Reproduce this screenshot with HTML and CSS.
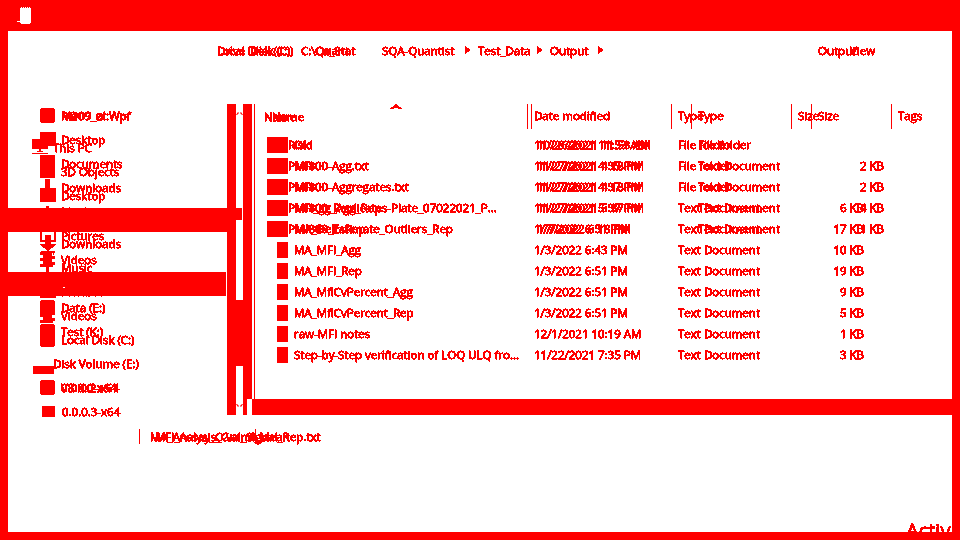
FILE: index.html
```html
<!DOCTYPE html>
<html lang="en">
<head>
<meta charset="utf-8">
<title>Output</title>
<link rel="stylesheet" href="styles.css">
</head>
<body>
<svg class="defs" width="0" height="0" aria-hidden="true">
  <filter id="crisp" x="0" y="0" width="100%" height="100%" color-interpolation-filters="sRGB">
    <feComponentTransfer><feFuncA type="discrete" tableValues="0 1 1 1 1 1 1 1"/></feComponentTransfer>
  </filter>
</svg>
<div class="app">
  <header class="titlebar">
    <svg class="app-icon" width="16" height="17" viewBox="0 0 16 17"><path d="M3 1h1v-1h1v1h1v-1h1v1h1v-1h1v1h1v-1h1v1h1v-1h1v1h1v15h-1v1H4v-1H3v-1H0v-1h3z" fill="#fff"/></svg>
  </header>
  <main class="window">
    <section class="layer layer-a ink">
      <div class="toolbar">
        <span class="stack crumb c1"><span>Local Disk (C:)</span><span>Drive 'Disk (C:)</span></span>
        <span class="stack crumb c2"><span>C:\Quant</span><span class="shift">Cu_Stat</span></span>
        <span class="crumb c3">SQA-Quantist</span><span class="chev"></span>
        <span class="crumb c4">Test_Data</span><span class="chev"></span>
        <span class="crumb c5">Output</span><span class="chev"></span>
        <span class="stack search"><span>Output</span><span class="view">View</span></span>
      </div>
      <div class="main">
        <nav class="nav">
          <div class="nav-row"><i class="ico blob"></i><span class="stack"><span>Ma09_ul:Wpf</span><span>R@09_zt:Wpf</span></span></div>
          <div class="nav-row"><i class="ico folder"></i>Desktop</div>
          <div class="nav-row"><i class="ico doc"></i>Documents</div>
          <div class="nav-row"><i class="ico stem"></i>Downloads</div>
          <div class="nav-row"><i class="ico note"></i>Music</div>
          <div class="nav-row"><i class="ico frame"></i>Pictures</div>
          <div class="nav-row"><i class="ico film"></i>Videos</div>
          <div class="nav-row"><i class="ico blob"></i>Local Disk (C:)</div>
          <div class="nav-row"><i class="ico blob"></i>Data (E:)</div>
          <div class="nav-row"><i class="ico blob"></i>Test (K:)</div>
        </nav>
        <div class="list">
          <div class="row head">
            <div class="th name">Name</div><div class="th">Date modified</div><div class="th">Type</div><div class="th">Size</div>
          </div>
          <div class="rows">
            <div class="row"><div class="name"><i class="fico"></i>Old</div><div class="td">11/28/2021 11:53 AM</div><div class="td">File folder</div><div class="td size"></div></div>
            <div class="row"><div class="name"><i class="fico"></i>MFI</div><div class="td">11/27/2021 4:35 PM</div><div class="td">File folder</div><div class="td size"></div></div>
            <div class="row"><div class="name"><i class="fico"></i>MFI</div><div class="td">11/27/2021 4:37 PM</div><div class="td">File folder</div><div class="td size"></div></div>
            <div class="row"><div class="name"><i class="fico"></i>MFI_gg_Agg_Rep</div><div class="td">11/27/2021 5:37 PM</div><div class="td">Text Document</div><div class="td size">6 KB</div></div>
            <div class="row"><div class="name"><i class="fico"></i>MA_DeltaRep</div><div class="td">1/7/2022 6:51 PM</div><div class="td">Text Document</div><div class="td size">17 KB</div></div>
            <div class="row"><div class="name"><i class="fico"></i>MA_MFI_Agg</div><div class="td">1/3/2022 6:43 PM</div><div class="td">Text Document</div><div class="td size">10 KB</div></div>
            <div class="row"><div class="name"><i class="fico"></i>MA_MFI_Rep</div><div class="td">1/3/2022 6:51 PM</div><div class="td">Text Document</div><div class="td size">19 KB</div></div>
            <div class="row"><div class="name"><i class="fico"></i>MA_MfiCvPercent_Agg</div><div class="td">1/3/2022 6:51 PM</div><div class="td">Text Document</div><div class="td size">9 KB</div></div>
            <div class="row"><div class="name"><i class="fico"></i>MA_MfiCvPercent_Rep</div><div class="td">1/3/2022 6:51 PM</div><div class="td">Text Document</div><div class="td size">5 KB</div></div>
            <div class="row"><div class="name"><i class="fico"></i>raw-MFI notes</div><div class="td">12/1/2021 10:19 AM</div><div class="td">Text Document</div><div class="td size">1 KB</div></div>
            <div class="row"><div class="name"><i class="fico"></i>Step-by-Step verification of LOQ ULQ fro...</div><div class="td">11/22/2021 7:35 PM</div><div class="td">Text Document</div><div class="td size">3 KB</div></div>
          </div>
        </div>
      </div>
      <div class="status"><span class="stack"><span>MA_Analysis_Grand_Mean</span><span class="shift-s">MFI_Assay_C-val_Signal_Rep.txt</span></span></div>
    </section>

    <section class="layer layer-b ink">
      <div class="toolbar"></div>
      <div class="main">
        <nav class="nav">
          <div class="nav-row out"><svg class="ico-svg" width="16" height="16" viewBox="0 0 16 16"><path d="M0 0h16v10H9v2h2v1H5v-1h2v-2H0zM0 14h16v1H0z" fill="#f00"/></svg>This PC</div>
          <div class="nav-row"><i class="ico box3d"></i>3D Objects</div>
          <div class="nav-row"><i class="ico folder"></i>Desktop</div>
          <div class="nav-row"><i class="ico doc"></i>Documents</div>
          <div class="nav-row"><svg class="ico-svg" width="16" height="16" viewBox="0 0 16 16"><path d="M5 0h6v9h5l-8 7-8-7h5z" fill="#f00"/></svg>Downloads</div>
          <div class="nav-row"><i class="ico note"></i>Music</div>
          <div class="nav-row"><i class="ico frame"></i>Pictures</div>
          <div class="nav-row"><i class="ico film"></i>Videos</div>
          <div class="nav-row"><i class="ico blob"></i>Local Disk (C:)</div>
          <div class="nav-row out"><i class="ico line"></i>Disk Volume (E:)</div>
          <div class="nav-row"><i class="ico blob"></i><span class="stack"><span>V8.0.0-x64</span><span>0.0.0.2-x64</span></span></div>
          <div class="nav-row"><i class="ico square"></i>0.0.0.3-x64</div>
        </nav>
        <div class="list">
          <div class="row head">
            <div class="th name">Name</div><div class="th">Date modified</div><div class="th">Type</div><div class="th">Size</div><div class="th">Tags</div>
          </div>
          <div class="rows">
            <div class="row"><div class="name"><i class="fico"></i>Risk</div><div class="td">10/26/2021 11:53 AM</div><div class="td">File folder</div><div class="td size"></div></div>
            <div class="row"><div class="name"><i class="fico"></i>PMI800-Agg.txt</div><div class="td">11/27/2021 4:18 PM</div><div class="td">Text Document</div><div class="td size">2 KB</div></div>
            <div class="row"><div class="name"><i class="fico"></i>PMI800-Aggregates.txt</div><div class="td">11/27/2021 4:18 PM</div><div class="td">Text Document</div><div class="td size">2 KB</div></div>
            <div class="row"><div class="name"><i class="fico"></i>PMI800_Replicates-Plate_07022021_P...</div><div class="td">11/27/2021 5:37 PM</div><div class="td">Text Document</div><div class="td size">4 KB</div></div>
            <div class="row"><div class="name"><i class="fico"></i>PMI800_Estimate_Outliers_Rep</div><div class="td">1/7/2022 6:18 PM</div><div class="td">Text Document</div><div class="td size">1 KB</div></div>
          </div>
        </div>
      </div>
    </section>

    <section class="layer chrome">
      <div class="nav-bands">
        <div class="band band-one"></div>
        <div class="band band-two"><b class="dot"></b></div>
      </div>
      <div class="scroll">
        <div class="sb-solid"></div>
        <div class="sb-track">
          <div class="track-gap t1"><svg width="7" height="4" viewBox="0 0 7 4"><path d="M0 4l2-3 1 1-2 2zM7 4L5 1 4 2l2 2z" fill="#f00"/></svg></div>
          <div class="track-bar t2"></div>
          <div class="track-gap t3"></div>
          <div class="track-bar t4"></div>
          <div class="track-gap t5"><svg width="7" height="4" viewBox="0 0 7 4"><path d="M0 0l2 3 1-1-2-2zM7 0L5 3 4 2l2-2z" fill="#f00"/></svg></div>
        </div>
        <div class="sb-right"><div class="sb-right-top"></div><div class="sb-right-foot"></div></div>
      </div>
      <div class="list-chrome">
        <div class="list-area"><svg class="sort" width="12" height="5" viewBox="0 0 12 5"><path d="M0 5V4h1V3h2V2h1V1h1V0h2v1h1v1h1v1h2v1h1v1H8V4H4v1z" fill="#f00"/></svg></div>
        <div class="hbar"></div>
      </div>
    </section>

    <div class="seps"><i class="sep"></i><i class="sep sep2"></i></div>
    <div class="watermark">Activate Windows</div>
  </main>
</div>
</body>
</html>
```

FILE: styles.css
```css
* { box-sizing: border-box; }
html, body { margin: 0; padding: 0; }
body { background: #f00; font-family: "Open Sans", "Liberation Sans", sans-serif; font-size: 11.5px; color: #f00; }
.defs { position: absolute; }
.app { width: 960px; height: 540px; display: flex; flex-direction: column; overflow: hidden; }
.titlebar { height: 31px; padding: 7px 0 0 17px; flex: none; }
.app-icon { display: block; }
.window { flex: 1; margin: 0 8px 8px; background: #fff; display: grid; position: relative; overflow: hidden; min-height: 0; }
.layer { grid-area: 1 / 1; display: flex; flex-direction: column; min-width: 0; min-height: 0; }
.ink { filter: url(#crisp); -webkit-text-stroke: 0.3px #f00; }
.stack { display: inline-grid; }
.stack > * { grid-area: 1 / 1; white-space: nowrap; }
.stack .shift { padding-left: 14px; }
.stack .shift-s { padding-left: 5px; }

.toolbar { height: 38px; display: flex; align-items: center; padding-left: 209px; }
.crumb { flex: none; white-space: nowrap; }
.c1 { width: 84px; }
.c2 { width: 81px; }
.c3 { width: 83px; }
.c4 { width: 59px; }
.c5 { width: 48px; }
.chev { flex: none; width: 13px; height: 8px; }
.chev::before { content: ""; display: block; width: 0; height: 0; border-left: 5px solid #f00; border-top: 4px solid transparent; border-bottom: 4px solid transparent; }
.search { margin-left: 207px; }
.search .view { padding-left: 32px; }

.main { margin-top: 34px; display: flex; height: 316px; }
.nav { width: 247px; flex: none; }
.nav-row { height: 24px; display: flex; align-items: center; padding-left: 32px; gap: 5px; white-space: nowrap; }
.nav-row.out { padding-left: 24px; }
.layer-b .nav { padding-top: 32px; }
.ico { display: block; width: 15px; height: 15px; flex: none; margin-right: 1px; background: #f00; }
.ico-svg { display: block; flex: none; }
.blob { border-radius: 4px; }
.folder { height: 14px; width: 16px; margin-right: 0; }
.doc { width: 15px; height: 16px; }
.stem { width: 5px; margin: 0 6px 0 5px; height: 16px; }
.note { width: 3px; height: 10px; margin: 0 7px 0 6px; }
.frame { width: 16px; height: 14px; margin-right: 0; background: transparent; border: 2px solid #f00; }
.film { border-left: 3px dotted #f00; border-right: 3px dotted #f00; background: #f00; border-radius: 1px; background-clip: padding-box; height: 16px; }
.box3d { height: 13px; }
.line { width: 21px; height: 8px; margin: 0 -6px 1px 1px; align-self: flex-end; }
.square { width: 13px; height: 11px; margin: 0 2px 0 2px; }

.list { flex: 1; padding-top: 1px; min-width: 0; }
.row { display: grid; }
.layer-a .row { grid-template-columns: 272px 144px 120px 80px; }
.layer-b .row { grid-template-columns: 276px 160px 120px 80px 60px; }
.head { height: 25px; margin-bottom: 5px; }
.th { padding-left: 6px; border-left: 1px solid #f00; line-height: 24px; white-space: nowrap; }
.th.name { border-left: 0; }
.layer-a .th.name { padding-left: 17px; }
.layer-b .th.name { padding-left: 9px; }
.layer-b .th:nth-child(2) { padding-left: 2px; }
.layer-b .rows .td:nth-child(2) { padding-left: 6px; }
.rows .row { height: 21px; line-height: 21px; }
.name { display: flex; align-items: center; white-space: nowrap; }
.td { padding-left: 7px; white-space: nowrap; }
.size { padding: 0 7px 0 0; text-align: right; }
.fico { display: block; flex: none; height: 16px; margin-top: 1px; background: #f00; }
.layer-a .fico { width: 11px; margin-left: 22px; margin-right: 6px; }
.layer-b .fico { width: 21px; margin-left: 12px; }
.status { margin-top: 10px; height: 15px; line-height: 15px; padding-left: 142px; }

.chrome { flex-direction: row; }
.nav-bands { width: 219px; flex: none; padding-top: 177px; }
.band { height: 24px; background: #f00; }
.band-two { margin-top: 40px; width: 218px; position: relative; }
.dot { position: absolute; left: 55px; top: 15px; width: 2px; height: 1px; background: #fff; }
.scroll { flex: none; width: 25px; height: 311px; margin-top: 73px; display: flex; }
.sb-solid { width: 9px; background: #f00; }
.sb-track { width: 7px; display: flex; flex-direction: column; }
.track-gap { background: #fff; }
.track-gap svg { display: block; }
.t1 { height: 104px; padding-top: 7px; }
.t2 { height: 12px; width: 6px; background: #f00; }
.t3 { height: 80px; }
.t4 { height: 66px; background: #f00; }
.t5 { height: 49px; padding-top: 38px; }
.sb-right { width: 9px; display: flex; flex-direction: column; }
.sb-right-top { height: 295px; background: #f00; }
.sb-right-foot { height: 16px; width: 4px; background: #f00; }
.list-chrome { flex: 1; margin-top: 73px; display: flex; flex-direction: column; }
.list-area { height: 295px; margin-left: 2px; border-left: 1px solid #f00; position: relative; }
.hbar { height: 16px; background: #f00; }
.sort { position: absolute; left: 135px; top: 0; }

.seps { position: absolute; left: 131px; top: 398px; display: flex; }
.sep { display: block; width: 1px; height: 15px; background: #f00; }
.sep2 { margin-left: 115px; }
.watermark { position: absolute; left: 898px; top: 488px; font-size: 20px; line-height: 24px; white-space: nowrap; filter: url(#crisp); -webkit-text-stroke: 0.3px #f00; }
```
